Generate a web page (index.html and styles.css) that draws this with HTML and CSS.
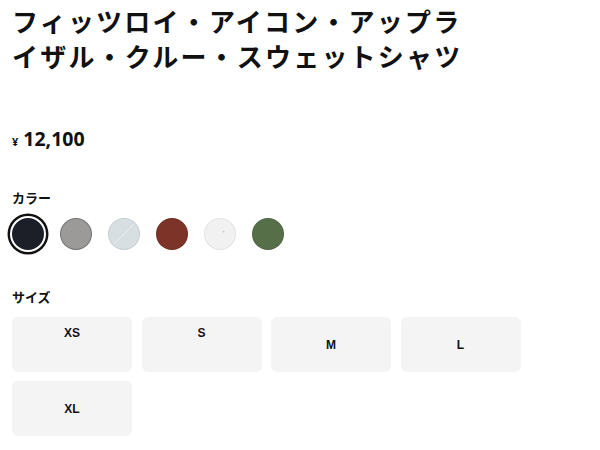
FILE: index.html
```html
<!DOCTYPE html>
<html lang="ja">
<head>
<meta charset="utf-8">
<link rel="stylesheet" href="styles.css">
</head>
<body>
<main class="product">
  <h1 class="title">フィッツロイ・アイコン・アップライザル・クルー・スウェットシャツ</h1>
  <p class="price"><span class="yen">¥</span><span class="amount">12,100</span></p>
  <section class="group colors">
    <h2 class="label">カラー</h2>
    <div class="swatches">
      <span class="swatch black selected"></span>
      <span class="swatch gray"></span>
      <span class="swatch blue"></span>
      <span class="swatch brown"></span>
      <span class="swatch white"></span>
      <span class="swatch green"></span>
    </div>
  </section>
  <section class="group sizes">
    <h2 class="label">サイズ</h2>
    <div class="size-grid">
      <button class="size top">XS</button>
      <button class="size top">S</button>
      <button class="size">M</button>
      <button class="size">L</button>
      <button class="size">XL</button>
    </div>
  </section>
</main>
</body>
</html>
```
FILE: styles.css
```css
* { box-sizing: border-box; }
html, body { margin: 0; padding: 0; background: #fff; }
body {
  font-family: "Noto Sans CJK JP", "Noto Sans", sans-serif;
  color: #111;
}
.product { padding: 3px 12px 0 12px; }
.title {
  margin: 0;
  width: 470px;
  font-size: 26px;
  line-height: 35px;
  font-weight: 700;
  letter-spacing: 2.2px;
}
.price {
  margin: 54px 0 0 0;
  line-height: 24px;
  display: flex;
  align-items: baseline;
  font-family: "Noto Sans", sans-serif;
  font-weight: 700;
}
.yen { font-size: 11px; margin-right: 5px; }
.amount { font-size: 19.5px; }
.group { margin-top: 35px; }
.group.sizes { margin-top: 38px; }
.label {
  margin: 0;
  font-size: 13px;
  line-height: 18px;
  font-weight: 700;
}
.swatches {
  margin-top: 11px;
  display: flex;
  gap: 16px;
  height: 32px;
}
.swatch {
  width: 32px;
  height: 32px;
  border-radius: 50%;
  border: 1px solid rgba(0,0,0,0.08);
  display: block;
}
.swatch.selected { box-shadow: 0 0 0 2px #fff, 0 0 0 4.5px #111; border: 0; }
.black { background: #1c1f27; }
.gray { background: #9b9a98; border-color: rgba(0,0,0,0.25); }
.blue { background: linear-gradient(135deg, #d8dfe3 49%, #e8edf0 50%, #d8dfe3 51.5%); }
.brown { background: #7b3427; }
.white { background: radial-gradient(circle at 62% 42%, #c8c8c8 0.6px, transparent 1.2px), #f1f1f1; border-color: rgba(0,0,0,0.06); }
.green { background: #566f49; }
.size-grid {
  margin-top: 11px;
  display: grid;
  grid-template-columns: repeat(4, 120px);
  column-gap: 9.5px;
  row-gap: 9px;
}
.size {
  height: 55px;
  border: 0;
  border-radius: 6px;
  background: #f4f4f4;
  font-family: "Liberation Sans", Arial, sans-serif;
  font-size: 12px;
  font-weight: 700;
  color: #111;
  padding: 0;
  display: flex;
  align-items: center;
  justify-content: center;
  line-height: 16px;
}
.size.top { align-items: flex-start; padding-top: 8px; }
```
